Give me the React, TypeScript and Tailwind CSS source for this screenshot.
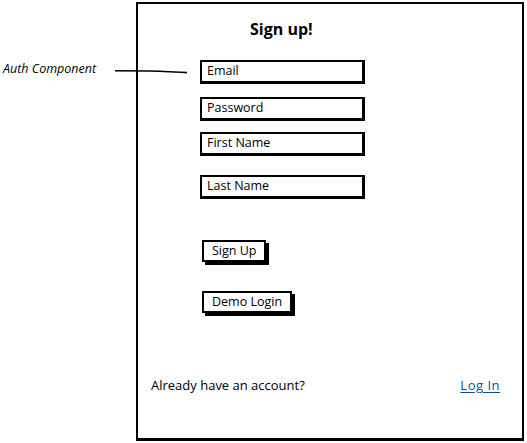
import React from "react";

const font = { fontFamily: '"Open Sans", "Liberation Sans", sans-serif' };

function Field({ label, className = "" }: { label: string; className?: string }) {
  return (
    <div
      className={`w-[165px] h-[24px] border-2 border-r-[3px] border-b-[3px] border-black bg-white flex items-center pl-[5px] text-[12.5px] text-black ${className}`}
    >
      {label}
    </div>
  );
}

function SketchButton({ label, className = "" }: { label: string; className?: string }) {
  return (
    <div
      className={`h-[22px] border-2 border-black bg-white flex items-center px-[8px] text-[12.5px] text-black shadow-[3px_3px_0_#000] ${className}`}
    >
      {label}
    </div>
  );
}

export default function App() {
  return (
    <div className="relative w-[527px] h-[443px] bg-white overflow-hidden" style={font}>
      {/* annotation */}
      <div className="absolute left-[3px] top-[60px] text-[12.5px] italic text-black">Auth Component</div>
      <svg className="absolute left-0 top-0" width="527" height="443">
        <path d="M115 70.8 Q140 71 150 71 T187 72.6" stroke="#000" strokeWidth="1.6" fill="none" />
      </svg>

      <div className="ml-[136px] mt-[2px] w-[388px] h-[439px] border-2 border-b-[3px] border-black flex flex-col">
        <div className="pl-[112px] mt-[16px] h-[18px] leading-[18px] text-[16px] font-bold text-black">Sign up!</div>

        <div className="pl-[62px] flex flex-col items-start">
          <Field label="Email" className="mt-[22px]" />
          <Field label="Password" className="mt-[13px]" />
          <Field label="First Name" className="mt-[11px]" />
          <Field label="Last Name" className="mt-[19px]" />
          <SketchButton label="Sign Up" className="mt-[41px] ml-[2px]" />
          <SketchButton label="Demo Login" className="mt-[29px] ml-[2px]" />
        </div>

        <div className="mt-[64px] pl-[13px] pr-[22px] flex justify-between items-center text-[13px] leading-[16px]">
          <span className="text-black">Already have an account?</span>
          <span className="text-[#0b4f9c] underline underline-offset-2 tracking-[0.5px]">Log In</span>
        </div>
      </div>
    </div>
  );
}
